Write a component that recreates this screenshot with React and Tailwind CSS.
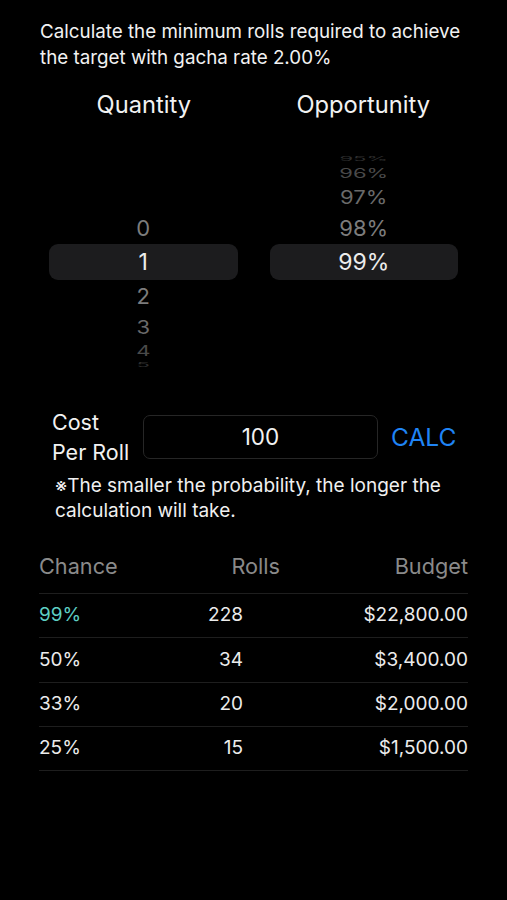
import React from "react";

const font = { fontFamily: "Inter, 'Noto Sans', sans-serif" };

function Wheel({ items }) {
  const slots = [
    { h: "h-[10px]", cls: "text-[22px] text-[#2e2e2e] scale-y-[0.3]" },
    { h: "h-[18px]", cls: "text-[22px] text-[#4a4a4a] scale-y-[0.6]" },
    { h: "h-[30px]", cls: "text-[22px] text-[#6a6a6a] scale-y-[0.85]" },
    { h: "h-[32px]", cls: "text-[22px] text-[#7c7c7c]" },
    { h: "h-[36px]", cls: "text-[23px] text-[#ececec]" },
    { h: "h-[32px]", cls: "text-[22px] text-[#7c7c7c]" },
    { h: "h-[30px]", cls: "text-[22px] text-[#6a6a6a] scale-y-[0.85]" },
    { h: "h-[18px]", cls: "text-[22px] text-[#4a4a4a] scale-y-[0.65]" },
    { h: "h-[10px]", cls: "text-[22px] text-[#2e2e2e] scale-y-[0.3]" },
  ];
  return (
    <div className="flex flex-col">
      {slots.map((s, i) => (
        <div
          key={i}
          className={`${s.h} flex items-center justify-center ${i === 4 ? "bg-[#1c1c1e] rounded-[9px]" : ""}`}
        >
          <span className={`leading-none ${s.cls}`}>{items[i] ?? ""}</span>
        </div>
      ))}
    </div>
  );
}

export default function App() {
  const rows = [
    ["99%", "228", "$22,800.00", true],
    ["50%", "34", "$3,400.00", false],
    ["33%", "20", "$2,000.00", false],
    ["25%", "15", "$1,500.00", false],
  ];
  return (
    <div className="min-h-[900px] w-[507px] bg-black text-white" style={font}>
      <div className="pt-[19px] pl-[40px] pr-[30px] text-[18.8px] leading-[26px] text-[#f2f2f2]">
        Calculate the minimum rolls required to achieve the target with gacha rate 2.00%
      </div>
      <div className="mt-[19px] grid grid-cols-2 gap-[32px] px-[50px] text-[23.7px] leading-[30px] text-[#f2f2f2]">
        <div className="text-center">Quantity</div>
        <div className="text-center">Opportunity</div>
      </div>
      <div className="mt-[34px] grid grid-cols-2 gap-[32px] px-[49px]">
        <Wheel items={["", "", "", "0", "1", "2", "3", "4", "5"]} />
        <Wheel items={["95%", "96%", "97%", "98%", "99%", "", "", "", ""]} />
      </div>
      <div className="mt-[37px] flex items-center pl-[52px] pr-[50px]">
        <div className="w-[91px] text-[21.5px] leading-[30px] text-[#f2f2f2]">
          Cost
          <br />
          Per Roll
        </div>
        <div className="flex h-[44px] w-[235px] items-center justify-center rounded-[7px] border border-[#262626] text-[22.5px] text-[#f2f2f2]">
          100
        </div>
        <div className="ml-[13px] text-[24.5px] text-[#1f84f5]">CALC</div>
      </div>
      <div className="mt-[6px] pl-[55px] pr-[40px] text-[19px] leading-[25px] text-[#f0f0f0]">
        ※The smaller the probability, the longer the calculation will take.
      </div>
      <div className="mt-[20px] px-[39px]">
        <div className="flex h-[50px] items-center pb-[4px] text-[21.7px] text-[#8a8a8a]">
          <div className="w-[160px]">Chance</div>
          <div className="w-[81px] text-right">Rolls</div>
          <div className="flex-1 text-right">Budget</div>
        </div>
        {rows.map(([c, r, b, hl]) => (
          <div
            key={c}
            className="flex h-[44.3px] items-center border-t border-[#1e1e1e] text-[19px] text-[#ececec]"
          >
            <div className={`w-[160px] ${hl ? "text-[#5ecfc3]" : ""}`}>{c}</div>
            <div className="w-[44px] text-right">{r}</div>
            <div className="flex-1 text-right">{b}</div>
          </div>
        ))}
        <div className="border-t border-[#1e1e1e]" />
      </div>
    </div>
  );
}
